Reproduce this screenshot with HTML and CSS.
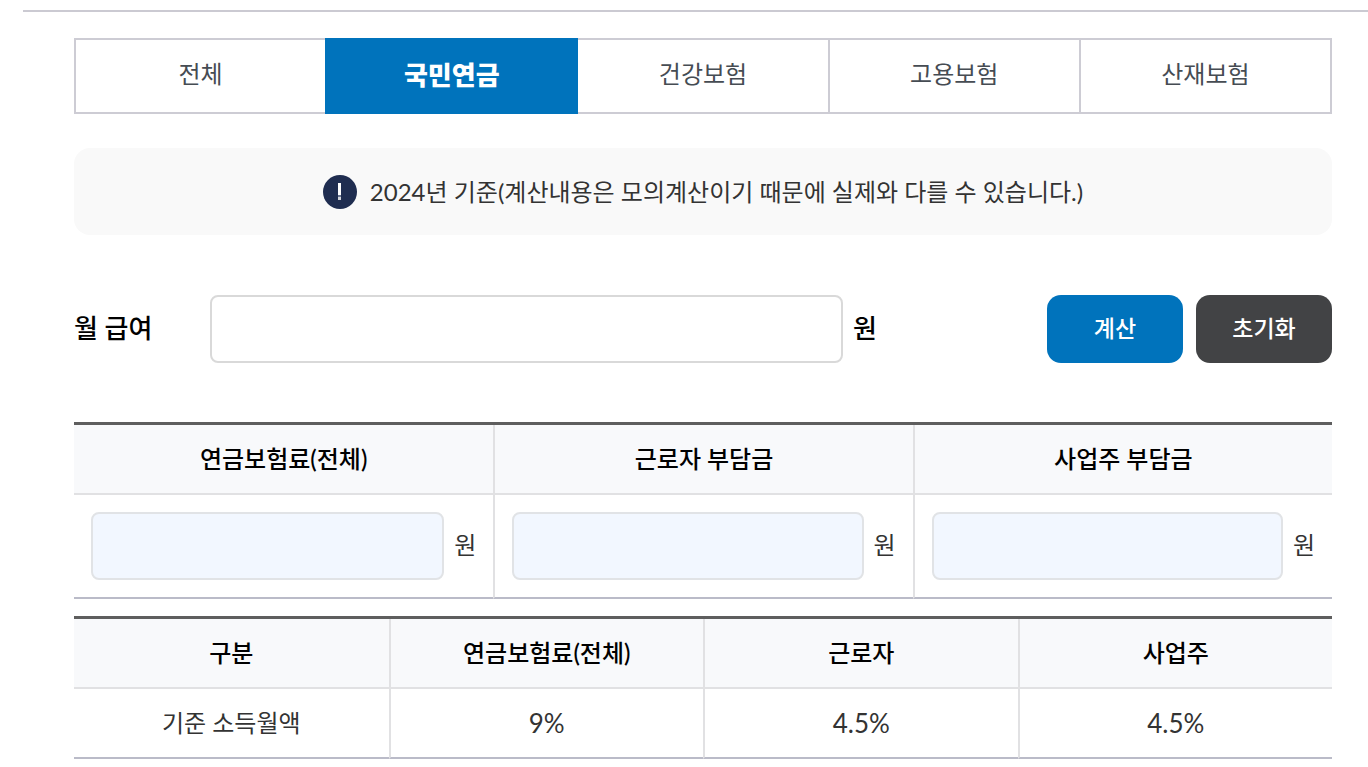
FILE: index.html
```html
<!DOCTYPE html>
<html lang="ko">
<head>
    <meta charset="UTF-8">
    <meta name="viewport" content="width=device-width, initial-scale=1.0">
    <title>국민연금 모의계산</title>
    <link rel="stylesheet" href="styles.css">
</head>
<body>

<div class="calc-container">
    <!-- Insurance tabs -->
    <div class="tab-list" role="tablist">
        <button type="button" class="tab" role="tab" aria-selected="false">전체</button>
        <button type="button" class="tab active" role="tab" aria-selected="true">국민연금</button>
        <button type="button" class="tab" role="tab" aria-selected="false">건강보험</button>
        <button type="button" class="tab" role="tab" aria-selected="false">고용보험</button>
        <button type="button" class="tab" role="tab" aria-selected="false">산재보험</button>
    </div>

    <!-- Notice -->
    <div class="notice">
        <svg class="notice-icon" viewBox="0 0 34 34" aria-hidden="true">
            <circle cx="17" cy="17" r="17" fill="#1f2d50"/>
            <rect x="15" y="8" width="3" height="12" fill="#fff"/>
            <rect x="15" y="20" width="3" height="2" fill="#6b7590"/>
            <rect x="15" y="22" width="3" height="3" fill="#d2d5dc"/>
        </svg>
        <p>2024년 기준(계산내용은 모의계산이기 때문에 실제와 다를 수 있습니다.)</p>
    </div>

    <!-- Salary form -->
    <form class="salary-form">
        <label class="salary-label" for="salary">월 급여</label>
        <input type="text" class="salary-input" id="salary">
        <span class="salary-unit">원</span>
        <div class="buttons">
            <button type="button" class="btn btn-calc">계산</button>
            <button type="reset" class="btn btn-reset">초기화</button>
        </div>
    </form>

    <!-- Result -->
    <table class="table">
        <thead>
            <tr>
                <th id="totalHead">연금보험료(전체)</th>
                <th id="workerHead">근로자 부담금</th>
                <th id="ownerHead">사업주 부담금</th>
            </tr>
        </thead>
        <tbody>
            <tr>
                <td class="result-cell">
                    <div class="result">
                        <input type="text" class="result-input" aria-labelledby="totalHead" readonly>
                        <span class="result-unit">원</span>
                    </div>
                </td>
                <td class="result-cell">
                    <div class="result">
                        <input type="text" class="result-input" aria-labelledby="workerHead" readonly>
                        <span class="result-unit">원</span>
                    </div>
                </td>
                <td class="result-cell">
                    <div class="result">
                        <input type="text" class="result-input" aria-labelledby="ownerHead" readonly>
                        <span class="result-unit">원</span>
                    </div>
                </td>
            </tr>
        </tbody>
    </table>

    <!-- Rates -->
    <table class="table">
        <thead>
            <tr>
                <th>구분</th>
                <th>연금보험료(전체)</th>
                <th>근로자</th>
                <th>사업주</th>
            </tr>
        </thead>
        <tbody>
            <tr>
                <td>기준 소득월액</td>
                <td class="rate">9%</td>
                <td class="rate">4.5%</td>
                <td class="rate">4.5%</td>
            </tr>
        </tbody>
    </table>
</div>

</body>
</html>
```

FILE: styles.css
```css
* {
    box-sizing: border-box;
}
body {
    margin: 0;
    background-color: #fff;
    color: #333;
    font-family: Lato, "Noto Sans CJK KR", sans-serif;
    font-size: 24px;
    line-height: 36px;
}
button,
input {
    font-family: inherit;
    font-size: inherit;
    line-height: inherit;
}
.calc-container {
    margin: 10px 0 0 23px;
    padding: 26px 36px 8px 51px;
    border-top: 2px solid #cbcad2;
}
/* Tabs */
.tab-list {
    display: flex;
}
.tab {
    flex: 1;
    height: 76px;
    padding: 0 0 4px;
    background-color: #fff;
    border: 2px solid #cdccd4;
    color: #464c53;
    cursor: pointer;
}
.tab + .tab {
    margin-left: -2px;
}
.tab.active {
    position: relative;
    padding-bottom: 2px;
    background-color: #0073bc;
    border-color: #0073bc;
    color: #fff;
    font-size: 26px;
    font-weight: 900;
}
/* Notice */
.notice {
    display: flex;
    justify-content: center;
    align-items: center;
    gap: 13px;
    margin-top: 34px;
    padding: 26px 20px 25px;
    background-color: #f9f9f9;
    border-radius: 16px;
}
.notice-icon {
    flex: none;
    width: 34px;
    height: 34px;
}
.notice p {
    margin: 0;
}
/* Salary form */
.salary-form {
    display: flex;
    align-items: center;
    margin: 60px 0 59px;
    color: #000;
}
.salary-label,
.salary-unit {
    padding-bottom: 2px;
    font-size: 26px;
    font-weight: 500;
}
.salary-label {
    width: 136px;
}
.salary-input {
    flex: 1;
    min-width: 0;
    height: 68px;
    padding: 0 16px;
    background-color: #fff;
    border: 2px solid #d9d9d9;
    border-radius: 8px;
}
.salary-unit {
    margin-left: 10px;
}
.buttons {
    display: flex;
    gap: 13px;
    margin-left: 170px;
}
.btn {
    width: 136px;
    height: 68px;
    padding: 0 0 2px;
    border: none;
    border-radius: 14px;
    color: #fff;
    font-size: 23px;
    font-weight: 500;
    cursor: pointer;
}
.btn-calc {
    background-color: #0073bc;
}
.btn-reset {
    background-color: #424345;
}
/* Tables */
.table {
    width: 100%;
    table-layout: fixed;
    border-collapse: separate;
    border-spacing: 0;
    border-top: 3px solid #5e5e5e;
    text-align: center;
}
.table + .table {
    margin-top: 17px;
}
.table th {
    height: 70px;
    padding: 0;
    background-color: #f8f9fb;
    border-bottom: 2px solid #e1e1e3;
    color: #000;
    font-weight: 500;
}
.table td {
    height: 70px;
    padding: 0;
    border-bottom: 2px solid #babbc8;
}
.table th + th,
.table td + td {
    border-left: 2px solid #e1e1e3;
}
.table .result-cell {
    padding: 17px;
}
.table .rate {
    font-size: 26px;
}
.result {
    display: flex;
    align-items: center;
    gap: 10px;
}
.result-input {
    flex: 1;
    min-width: 0;
    height: 68px;
    padding: 0 16px;
    background-color: #f2f7ff;
    border: 2px solid #e1e3e6;
    border-radius: 8px;
}
.result-unit {
    padding-bottom: 2px;
}
```
